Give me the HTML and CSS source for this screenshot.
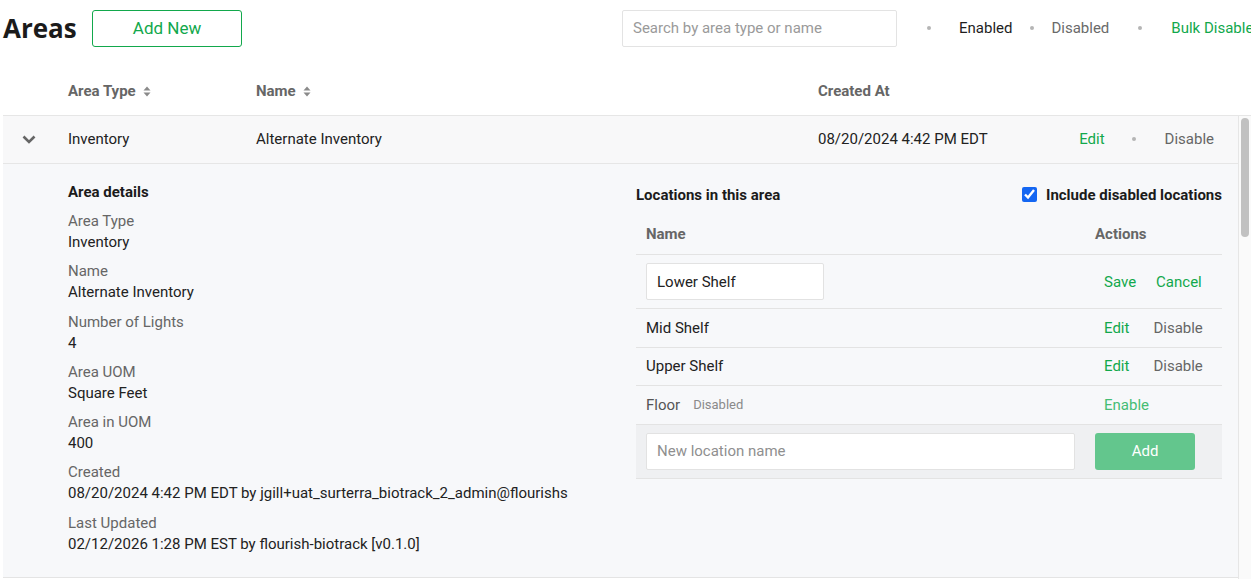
FILE: index.html
```html
<!DOCTYPE html>
<html lang="en">
<head>
<meta charset="utf-8">
<title>Areas</title>
<link rel="stylesheet" href="styles.css">
</head>
<body>
<div class="page">
  <div class="toolbar">
    <h1 class="title">Areas</h1>
    <button class="btn-outline">Add New</button>
    <input class="search" type="text" placeholder="Search by area type or name">
    <span class="dot sep-a"></span>
    <span class="filter active">Enabled</span>
    <span class="dot sep-b"></span>
    <span class="filter">Disabled</span>
    <span class="dot sep-c"></span>
    <span class="bulk">Bulk Disable</span>
  </div>

  <div class="thead">
    <div></div>
    <div class="th">Area Type <svg class="sort" viewBox="0 0 8 11" width="8" height="11"><path d="M4 0.5 L7.5 4.5 H0.5 Z M4 10.5 L7.5 6.5 H0.5 Z" fill="#8a8a8a"/></svg></div>
    <div class="th">Name <svg class="sort" viewBox="0 0 8 11" width="8" height="11"><path d="M4 0.5 L7.5 4.5 H0.5 Z M4 10.5 L7.5 6.5 H0.5 Z" fill="#8a8a8a"/></svg></div>
    <div class="th">Created At</div>
    <div></div>
  </div>

  <div class="tbody">
    <div class="tbody-content">
      <div class="row">
        <div class="chev"><svg viewBox="0 0 14 9" width="14" height="9"><path d="M1.5 1.5 L7 7 L12.5 1.5" fill="none" stroke="#666" stroke-width="2.6"/></svg></div>
        <div>Inventory</div>
        <div>Alternate Inventory</div>
        <div>08/20/2024 4:42 PM EDT</div>
        <div class="row-actions"><span class="link">Edit</span><span class="dot"></span><span class="muted-link">Disable</span></div>
      </div>

      <div class="detail">
        <div class="details-col">
          <div class="section-title">Area details</div>
          <div class="field"><div class="label">Area Type</div><div class="value">Inventory</div></div>
          <div class="field"><div class="label">Name</div><div class="value">Alternate Inventory</div></div>
          <div class="field"><div class="label">Number of Lights</div><div class="value">4</div></div>
          <div class="field"><div class="label">Area UOM</div><div class="value">Square Feet</div></div>
          <div class="field"><div class="label">Area in UOM</div><div class="value">400</div></div>
          <div class="field"><div class="label">Created</div><div class="value">08/20/2024 4:42 PM EDT by jgill+uat_surterra_biotrack_2_admin@flourishs</div></div>
          <div class="field"><div class="label">Last Updated</div><div class="value">02/12/2026 1:28 PM EST by flourish-biotrack [v0.1.0]</div></div>
        </div>

        <div class="locations">
          <div class="loc-head">
            <span class="section-title">Locations in this area</span>
            <label class="include"><input type="checkbox" checked> Include disabled locations</label>
          </div>
          <div class="loc-table">
            <div class="loc-row loc-th"><div class="c-name">Name</div><div class="c-act">Actions</div></div>
            <div class="loc-row tall"><div class="c-name"><input class="inp edit-inp" type="text" value="Lower Shelf"></div><div class="c-act"><span class="link">Save</span><span class="link gap20">Cancel</span></div></div>
            <div class="loc-row"><div class="c-name">Mid Shelf</div><div class="c-act"><span class="link">Edit</span><span class="muted-link gap24">Disable</span></div></div>
            <div class="loc-row"><div class="c-name">Upper Shelf</div><div class="c-act"><span class="link">Edit</span><span class="muted-link gap24">Disable</span></div></div>
            <div class="loc-row"><div class="c-name off">Floor <span class="tag">Disabled</span></div><div class="c-act"><span class="link light">Enable</span></div></div>
            <div class="loc-row tall add-row"><div class="c-name"><input class="inp new-inp" type="text" placeholder="New location name"></div><div class="c-act flush"><button class="btn-add">Add</button></div></div>
          </div>
        </div>
      </div>
    </div>
    <div class="vscroll" aria-hidden="true"><div class="thumb"></div></div>
  </div>
</div>
</body>
</html>
```

FILE: styles.css
```css
* { box-sizing: border-box; }
html, body { margin: 0; padding: 0; overflow: hidden; background: #fff; }
body { font-family: Roboto, "Liberation Sans", Arial, sans-serif; font-size: 15px; color: #222; }

.page { height: 579px; display: flex; flex-direction: column; padding-left: 3px; }

.toolbar { display: flex; align-items: center; height: 36px; margin-top: 10px; white-space: nowrap; flex: none; }
.toolbar > * { flex: none; }
.title { margin: 0; width: 73px; font-family: "Open Sans", "Liberation Sans", sans-serif; font-weight: 700; font-size: 26px; letter-spacing: 0; color: #1b1b1b; line-height: 36px; }
.btn-outline { margin-left: 16px; width: 150px; height: 37px; border: 1px solid #12a84c; border-radius: 3px; background: #fff; color: #12a84c; font-family: Roboto, sans-serif; font-size: 17px; padding: 0; }
.search { margin-left: 380px; width: 275px; height: 37px; border: 1px solid #e3e3e3; border-radius: 2px; padding: 0 10px; font-family: Roboto, sans-serif; font-size: 15px; color: #222; outline: none; }
.search::placeholder { color: #9a9a9a; }
.dot { display: inline-block; width: 4px; height: 4px; border-radius: 50%; background: #b5b5b5; flex: none; }
.sep-a { margin-left: 30px; margin-right: 28px; }
.sep-b { margin-left: 18px; margin-right: 17px; }
.sep-c { margin-left: 29px; margin-right: 29px; }
.filter { color: #6a6a6a; }
.filter.active { color: #1e1e1e; }
.bulk { color: #12a84c; }

.thead { display: grid; grid-template-columns: 65px 188px 562px 1fr 160px; height: 49px; margin-top: 21px; border-bottom: 1px solid #e6e6e6; align-items: center; flex: none; }
.th { font-weight: 700; color: #666; display: flex; align-items: center; }
.sort { margin-left: 7px; }

.tbody { flex: 1; min-height: 0; display: flex; }
.tbody-content { flex: 1; min-width: 0; overflow: hidden; }
.vscroll { width: 13px; flex: none; background: #fafafa; border-left: 1px solid #e6e6e6; padding: 2px 2px 0 2px; }
.thumb { width: 8px; height: 119px; border-radius: 4px; background: #c1c1c1; }

.row { display: grid; grid-template-columns: 65px 188px 562px 1fr auto; height: 48px; align-items: center; background: #f8f8f9; border-bottom: 1px solid #e6e6e6; padding-bottom: 1px; }
.chev { padding-left: 19px; display: flex; align-items: center; }
.row-actions { display: flex; align-items: center; gap: 27px; padding-right: 24px; }
.row-actions .dot { margin-right: 2px; }
.link { color: #12a84c; }
.link.light { color: #45bd74; }
.muted-link { color: #666; }

.detail { display: flex; background: #f7f8fa; padding: 17px 16px 22px 65px; border-bottom: 1px solid #e4e4e4; }
.details-col { width: 568px; flex: none; line-height: 21px; padding-top: 1px; }
.section-title { font-weight: 700; color: #1b1b1b; font-size: 15px; }
.details-col .section-title { display: block; margin-bottom: 8px; }
.field { margin-bottom: 8.3px; }
.field:last-child { margin-bottom: 0; }
.label { color: #666; }
.value { color: #222; white-space: nowrap; }

.locations { flex: 1; padding-top: 3px; }
.loc-head { display: flex; justify-content: space-between; align-items: center; height: 21px; margin-bottom: 9px; }
.include { display: flex; align-items: center; font-weight: 700; color: #1b1b1b; }
.include input { width: 15px; height: 15px; margin: 0 9px 0 0; accent-color: #1466f2; }

.loc-row { display: flex; align-items: center; height: 38.5px; border-bottom: 1px solid #e3e3e3; }
.loc-th { height: 41px; font-weight: 700; color: #666; }
.loc-row.tall { height: 54px; }
.c-name { flex: 1; padding-left: 10px; display: flex; align-items: center; }
.c-act { width: 127px; flex: none; padding-left: 9px; display: flex; align-items: center; }
.loc-th .c-act { padding-left: 0; }
.c-act.flush { padding-left: 0; }
.gap20 { margin-left: 20px; }
.gap24 { margin-left: 24px; }
.off { color: #555; }
.tag { font-size: 13px; color: #8a8a8a; margin-left: 13px; }

.inp { height: 37px; border: 1px solid #e2e2e2; border-radius: 2px; background: #fff; padding: 0 10px; font-family: Roboto, sans-serif; font-size: 15px; color: #222; outline: none; }
.edit-inp { width: 178px; }
.new-inp { width: 429px; }
.new-inp::placeholder { color: #8f8f8f; }
.add-row { background: #eff0f2; }
.btn-add { width: 100px; height: 37px; border: none; border-radius: 3px; background: #63c68d; color: #fff; font-family: Roboto, sans-serif; font-size: 15px; padding: 0; }
```
